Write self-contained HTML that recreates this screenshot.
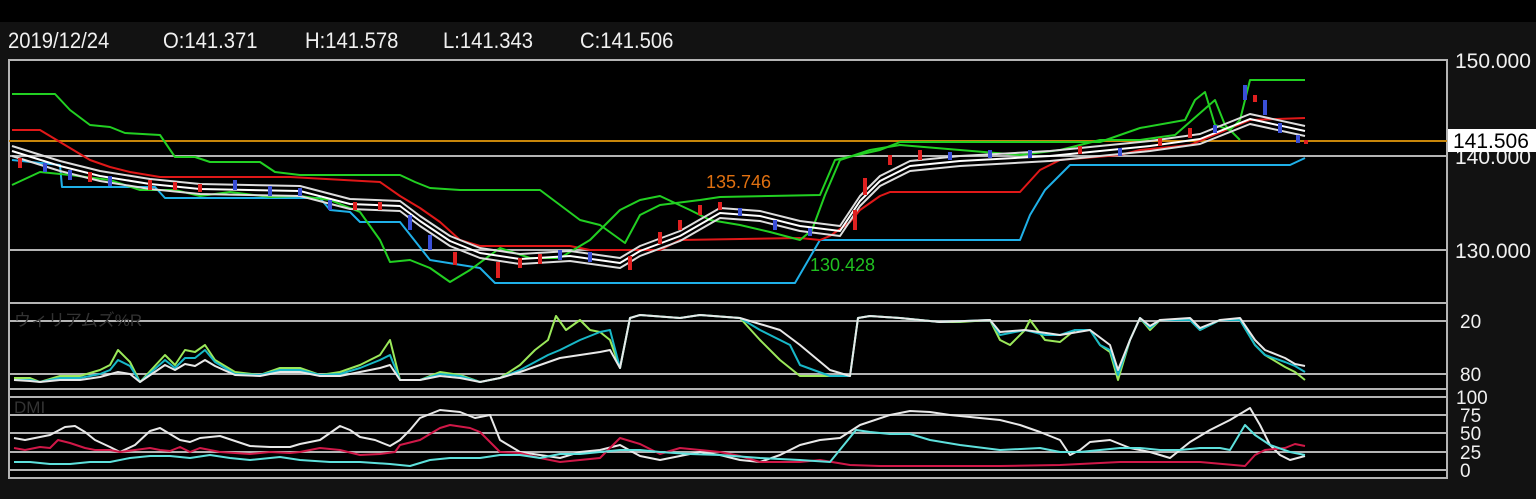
<!DOCTYPE html>
<html><head><meta charset="utf-8"><style>
html,body{margin:0;padding:0;background:#121212;width:1536px;height:499px;overflow:hidden;font-family:"Liberation Sans","Noto Sans CJK JP",sans-serif}
.t{position:absolute;color:#f0f0f0;font-size:22px;line-height:22px;white-space:nowrap;transform:scaleX(0.92);transform-origin:0 0}
</style></head><body>
<div style="position:absolute;left:0;top:0;width:1536px;height:22px;background:#000"></div>
<div class="t" style="left:8px;top:30px">2019/12/24</div>
<div class="t" style="left:163px;top:30px">O:141.371</div>
<div class="t" style="left:305px;top:30px">H:141.578</div>
<div class="t" style="left:443px;top:30px">L:141.343</div>
<div class="t" style="left:580px;top:30px">C:141.506</div>
<svg width="1536" height="499" style="position:absolute;left:0;top:0" xmlns="http://www.w3.org/2000/svg" font-family="Liberation Sans, sans-serif">
<rect x="9" y="59" width="1438" height="420" fill="#000"/>
<g stroke="#b4b4b4" stroke-width="2" fill="none">
<rect x="9" y="60" width="1438" height="418"/>
<line x1="9" y1="156" x2="1447" y2="156"/><line x1="9" y1="250" x2="1447" y2="250"/>
<line x1="9" y1="303" x2="1447" y2="303"/><line x1="9" y1="321" x2="1447" y2="321"/>
<line x1="9" y1="374" x2="1447" y2="374"/><line x1="9" y1="389" x2="1447" y2="389"/>
<line x1="9" y1="397" x2="1447" y2="397"/><line x1="9" y1="415" x2="1447" y2="415"/>
<line x1="9" y1="433" x2="1447" y2="433"/><line x1="9" y1="452" x2="1447" y2="452"/>
<line x1="9" y1="470" x2="1447" y2="470"/>
</g>
<line x1="9" y1="141" x2="1447" y2="141" stroke="#c8860a" stroke-width="2"/>
<g fill="none" stroke-width="2" stroke-linejoin="round">
<polyline stroke="#1fb0e8" points="12,160 60,165 62,187 155,187 165,198 320,198 330,210 350,212 360,222 400,222 430,260 480,268 495,283 795,283 820,240 1020,240 1030,215 1045,190 1070,165 1290,165 1305,158"/>
<polyline stroke="#e01818" points="12,130 40,130 60,142 90,160 110,167 130,172 160,177 290,177 380,182 400,196 420,208 440,222 460,240 480,246 570,246 590,250 660,250 680,240 800,238 820,240 830,236 850,222 860,210 880,196 890,192 1020,192 1040,170 1060,160 1120,155 1140,150 1190,145 1250,120 1305,118"/>
<polyline stroke="#22d022" points="12,94 55,94 70,110 90,125 110,127 125,133 160,135 175,157 195,157 210,162 260,162 275,172 300,175 400,175 415,182 430,188 460,190 540,190 560,205 580,220 600,225 625,243 640,215 660,205 700,200 720,197 820,195 835,160 880,150 900,142 1100,142 1140,128 1185,120 1195,100 1205,92 1215,125 1230,130 1240,120 1250,80 1305,80"/>
<polyline stroke="#22d022" points="12,185 40,172 70,175 110,180 140,190 175,190 200,196 230,192 270,197 300,196 330,200 360,212 380,240 390,262 410,260 430,268 450,282 470,270 500,248 530,258 560,258 590,240 620,210 640,200 660,196 690,210 710,220 740,225 770,232 800,240 812,230 825,195 840,160 870,150 900,145 960,150 1020,155 1060,150 1100,140 1140,140 1175,135 1215,100 1225,125 1240,140"/>
<polyline stroke="#ddd" points="12,146 60,161 100,171 150,179 200,184 300,186 350,199 400,201 420,216 450,236 480,248 520,254 570,251 620,258 640,246 680,231 720,208 760,211 800,221 840,226 860,196 880,176 910,161 960,156 1050,151 1100,146 1150,141 1200,134 1250,114 1305,126"/>
<polyline stroke="#fff" points="12,151 60,166 100,176 150,184 200,189 300,191 350,204 400,206 420,221 450,241 480,253 520,259 570,256 620,263 640,251 680,236 720,213 760,216 800,226 840,231 860,201 880,181 910,166 960,161 1050,156 1100,151 1150,146 1200,139 1250,119 1305,131"/>
<polyline stroke="#ddd" points="12,156 60,171 100,181 150,189 200,194 300,196 350,209 400,211 420,226 450,246 480,258 520,264 570,261 620,268 640,256 680,241 720,218 760,221 800,231 840,236 860,206 880,186 910,171 960,166 1050,161 1100,156 1150,151 1200,144 1250,124 1305,136"/>
</g>
<g stroke-width="4">
<line x1="20" y1="158" x2="20" y2="168" stroke="#e02020"/><line x1="45" y1="163" x2="45" y2="172" stroke="#3a4fd8"/>
<line x1="70" y1="170" x2="70" y2="180" stroke="#3a4fd8"/><line x1="90" y1="172" x2="90" y2="182" stroke="#e02020"/>
<line x1="110" y1="176" x2="110" y2="186" stroke="#3a4fd8"/><line x1="150" y1="180" x2="150" y2="190" stroke="#e02020"/>
<line x1="175" y1="182" x2="175" y2="190" stroke="#e02020"/><line x1="200" y1="184" x2="200" y2="192" stroke="#e02020"/>
<line x1="235" y1="180" x2="235" y2="190" stroke="#3a4fd8"/><line x1="270" y1="186" x2="270" y2="196" stroke="#3a4fd8"/>
<line x1="300" y1="188" x2="300" y2="196" stroke="#3a4fd8"/><line x1="330" y1="200" x2="330" y2="210" stroke="#3a4fd8"/>
<line x1="355" y1="202" x2="355" y2="210" stroke="#e02020"/><line x1="380" y1="202" x2="380" y2="210" stroke="#e02020"/>
<line x1="410" y1="215" x2="410" y2="230" stroke="#3a4fd8"/><line x1="430" y1="235" x2="430" y2="250" stroke="#3a4fd8"/>
<line x1="455" y1="252" x2="455" y2="265" stroke="#e02020"/><line x1="498" y1="262" x2="498" y2="278" stroke="#e02020"/>
<line x1="520" y1="258" x2="520" y2="268" stroke="#e02020"/><line x1="540" y1="254" x2="540" y2="264" stroke="#e02020"/>
<line x1="560" y1="250" x2="560" y2="260" stroke="#3a4fd8"/><line x1="590" y1="252" x2="590" y2="262" stroke="#3a4fd8"/>
<line x1="630" y1="256" x2="630" y2="270" stroke="#e02020"/><line x1="660" y1="232" x2="660" y2="244" stroke="#e02020"/>
<line x1="680" y1="220" x2="680" y2="230" stroke="#e02020"/><line x1="700" y1="205" x2="700" y2="215" stroke="#e02020"/>
<line x1="720" y1="202" x2="720" y2="210" stroke="#e02020"/><line x1="740" y1="208" x2="740" y2="216" stroke="#3a4fd8"/>
<line x1="775" y1="220" x2="775" y2="230" stroke="#3a4fd8"/><line x1="810" y1="228" x2="810" y2="236" stroke="#3a4fd8"/>
<line x1="855" y1="210" x2="855" y2="230" stroke="#e02020"/><line x1="865" y1="178" x2="865" y2="195" stroke="#e02020"/>
<line x1="890" y1="155" x2="890" y2="165" stroke="#e02020"/><line x1="920" y1="150" x2="920" y2="160" stroke="#e02020"/>
<line x1="950" y1="152" x2="950" y2="160" stroke="#3a4fd8"/><line x1="990" y1="150" x2="990" y2="158" stroke="#3a4fd8"/>
<line x1="1030" y1="150" x2="1030" y2="158" stroke="#3a4fd8"/><line x1="1080" y1="146" x2="1080" y2="154" stroke="#e02020"/>
<line x1="1120" y1="148" x2="1120" y2="156" stroke="#3a4fd8"/><line x1="1160" y1="138" x2="1160" y2="146" stroke="#e02020"/>
<line x1="1190" y1="128" x2="1190" y2="138" stroke="#e02020"/><line x1="1215" y1="125" x2="1215" y2="133" stroke="#3a4fd8"/>
<line x1="1245" y1="85" x2="1245" y2="100" stroke="#3a4fd8"/><line x1="1255" y1="95" x2="1255" y2="102" stroke="#e02020"/>
<line x1="1265" y1="100" x2="1265" y2="115" stroke="#3a4fd8"/><line x1="1280" y1="123" x2="1280" y2="133" stroke="#3a4fd8"/>
<line x1="1298" y1="135" x2="1298" y2="143" stroke="#3a4fd8"/><line x1="1306" y1="140" x2="1306" y2="144" stroke="#e02020"/>
</g>
<g fill="none" stroke-width="2" stroke-linejoin="round">
<polyline stroke="#9be85a" points="14,378 30,378 40,382 60,376 80,376 100,370 110,365 118,350 130,362 140,382 165,355 175,365 185,350 195,352 205,345 215,360 235,372 260,375 280,368 300,368 320,375 340,372 360,365 380,355 390,340 400,380 420,380 440,372 460,375 480,382 500,378 520,365 535,350 548,340 556,316 566,330 580,320 590,330 600,332 610,340 620,368 630,318 640,315 680,318 700,315 740,318 760,340 780,360 800,376 830,376 850,376 858,318 870,316 900,318 920,320 940,322 960,322 990,320 1000,340 1010,345 1025,330 1030,320 1045,340 1060,342 1075,330 1090,330 1100,345 1110,352 1118,380 1130,340 1140,318 1150,330 1160,320 1190,320 1200,330 1220,320 1240,320 1255,345 1265,355 1285,367 1295,372 1305,380"/>
<polyline stroke="#18b8c8" points="14,380 30,380 40,382 60,378 80,378 100,374 110,370 118,360 130,366 140,382 165,360 175,368 185,358 195,358 205,350 215,362 235,374 260,375 280,370 300,370 320,375 340,374 360,368 380,360 390,355 400,380 420,380 440,374 460,376 480,382 500,378 520,370 535,362 548,355 560,350 580,340 600,332 610,330 620,368 630,318 640,315 680,318 700,315 740,318 760,330 790,345 800,365 830,376 850,376 858,318 870,316 900,318 940,322 990,320 1000,335 1025,330 1045,335 1060,335 1075,330 1090,330 1100,345 1110,350 1118,375 1130,340 1140,318 1150,328 1160,320 1190,320 1200,330 1220,320 1240,320 1255,345 1265,355 1285,362 1295,366 1305,372"/>
<polyline stroke="#e8e8e8" points="14,380 30,381 40,382 60,380 80,380 100,377 118,372 130,374 140,382 165,365 175,370 185,364 195,366 205,360 215,366 235,375 260,376 280,372 300,372 320,376 340,376 360,372 380,368 390,365 400,380 420,380 440,376 460,378 480,382 500,378 520,372 540,365 560,358 580,355 600,352 610,350 620,368 630,318 640,315 680,318 700,315 740,318 780,330 800,345 830,370 850,376 858,318 870,316 900,318 940,322 990,320 1000,332 1025,330 1060,335 1090,330 1110,345 1118,370 1130,340 1140,318 1150,326 1160,320 1190,318 1200,328 1220,320 1240,318 1255,340 1265,350 1285,358 1295,364 1305,366"/>
<polyline stroke="#e8e8e8" points="14,438 25,440 40,437 50,435 65,427 75,426 85,432 95,440 110,447 120,452 135,445 150,431 160,428 170,434 180,440 190,442 200,438 220,436 250,446 270,447 290,447 300,444 320,440 330,433 340,426 350,430 360,437 375,440 390,446 400,440 410,430 420,418 440,410 460,412 475,418 490,415 500,440 520,452 540,455 560,458 580,452 600,450 620,445 640,456 660,460 680,456 700,452 720,455 740,460 760,462 780,455 800,445 820,440 840,438 860,425 890,415 910,411 930,412 950,415 980,418 1000,420 1020,425 1040,432 1060,440 1070,455 1080,450 1090,442 1110,440 1130,448 1150,452 1170,458 1190,442 1210,430 1230,420 1250,408 1260,425 1270,445 1280,455 1290,460 1305,456"/>
<polyline stroke="#d01848" points="14,448 25,450 40,447 50,448 58,440 70,443 85,448 95,450 110,450 120,452 135,450 150,448 160,450 170,451 180,447 190,452 200,448 220,452 250,454 270,452 290,453 300,452 320,448 340,450 360,455 380,454 395,452 400,445 420,440 440,428 450,425 470,428 480,432 500,452 520,453 540,458 560,462 580,460 600,458 620,438 640,444 660,454 680,448 700,450 720,452 740,456 760,462 800,462 820,460 850,465 880,466 1000,466 1060,465 1120,462 1160,462 1200,462 1245,466 1255,455 1265,450 1285,448 1295,444 1305,446"/>
<polyline stroke="#5ee0dc" points="14,462 30,462 50,464 70,464 90,462 110,462 130,458 150,456 170,456 190,458 210,455 230,458 250,460 280,457 300,460 330,462 360,462 390,464 410,466 430,460 450,458 480,458 500,455 520,455 540,458 560,454 580,454 600,452 620,450 640,450 660,452 690,454 720,455 760,458 800,460 830,462 856,430 870,432 890,434 910,434 930,440 960,445 1000,450 1040,448 1060,452 1080,452 1100,450 1120,448 1140,448 1160,450 1180,450 1200,448 1220,448 1230,450 1245,425 1255,435 1270,445 1290,452 1305,455"/>
</g>
<text x="706" y="188" fill="#e07010" font-size="18">135.746</text>
<text x="810" y="271" fill="#20c020" font-size="18">130.428</text>
<text x="14" y="326" fill="#333" font-size="17" font-family="Liberation Sans, Noto Sans CJK JP, sans-serif">ウィリアムズ%R</text>
<text x="14" y="413" fill="#333" font-size="17">DMI</text>
<g fill="#f0f0f0" font-size="21">
<text x="1455" y="68">150.000</text>
<text x="1455" y="164">140.000</text>
<text x="1455" y="258">130.000</text>
</g>
<rect x="1448" y="129" width="88" height="23" fill="#fff"/>
<text x="1453" y="148" fill="#000" font-size="21">141.506</text>
<g fill="#f0f0f0" font-size="19">
<text x="1460" y="328">20</text><text x="1460" y="381">80</text>
<text x="1456" y="404">100</text><text x="1460" y="422">75</text>
<text x="1460" y="440">50</text><text x="1460" y="459">25</text><text x="1460" y="477">0</text>
</g>
</svg>
</body></html>
